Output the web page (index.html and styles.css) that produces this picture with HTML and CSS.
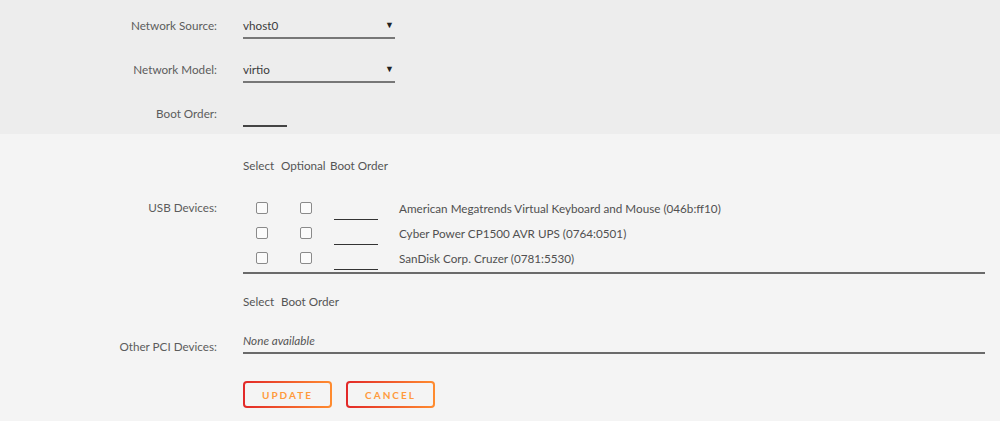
FILE: index.html
```html
<!DOCTYPE html>
<html lang="en">
<head>
    <meta charset="UTF-8">
    <title>Edit VM</title>
    <link rel="stylesheet" href="styles.css">
</head>
<body>
    <div class="band">
        <div class="row">
            <span class="label">Network Source:</span>
            <div class="select"><span>vhost0</span><span class="arrow">&#9660;</span></div>
        </div>
        <div class="row">
            <span class="label">Network Model:</span>
            <div class="select"><span>virtio</span><span class="arrow">&#9660;</span></div>
        </div>
        <div class="row">
            <span class="label">Boot Order:</span>
            <div class="order"></div>
        </div>
    </div>

    <div class="section">
        <div class="row head-row">
            <span class="label"></span>
            <div class="cols">
                <span>Select</span>
                <span>Optional</span>
                <span>Boot Order</span>
            </div>
        </div>

        <div class="row usb-row">
            <span class="label usb-label">USB Devices:</span>
            <div class="usb-list">
                <div class="cols usb">
                    <span class="box"></span>
                    <span class="box"></span>
                    <span class="order small"></span>
                    <span class="name">American Megatrends Virtual Keyboard and Mouse (046b:ff10)</span>
                </div>
                <div class="cols usb">
                    <span class="box"></span>
                    <span class="box"></span>
                    <span class="order small"></span>
                    <span class="name">Cyber Power CP1500 AVR UPS (0764:0501)</span>
                </div>
                <div class="cols usb">
                    <span class="box"></span>
                    <span class="box"></span>
                    <span class="order small"></span>
                    <span class="name">SanDisk Corp. Cruzer (0781:5530)</span>
                </div>
            </div>
        </div>

        <div class="row head-row pci-head">
            <span class="label"></span>
            <div class="cols two">
                <span>Select</span>
                <span>Boot Order</span>
            </div>
        </div>

        <div class="row pci-row">
            <span class="label pci-label">Other PCI Devices:</span>
            <div class="none">None available</div>
        </div>

        <div class="row buttons">
            <span class="label"></span>
            <button type="submit">Update</button>
            <button type="button">Cancel</button>
        </div>
    </div>
</body>
</html>
```

FILE: styles.css
```css
body {
    margin: 0;
    font-family: Lato, 'Liberation Sans', sans-serif;
    font-size: 11.7px;
    color: #505050;
    background: #f4f4f4;
}
.band {
    background: #ededed;
    padding: 13px 0 7px;
}
.row {
    display: flex;
    align-items: flex-start;
    padding-right: 15px;
}
.band .row {
    height: 26px;
    margin-bottom: 18px;
}
.band .row:last-child {
    margin-bottom: 0;
}
.label {
    width: 217px;
    flex: none;
    margin-right: 26px;
    text-align: right;
    line-height: 24px;
    color: #5c5c5c;
}
.select {
    width: 152px;
    height: 24px;
    line-height: 24px;
    display: flex;
    justify-content: space-between;
    border-bottom: 2px solid #777;
    color: #3c3c3c;
}
.arrow {
    font-size: 9px;
    padding-right: 1px;
    color: #222;
}
.order {
    width: 44px;
    height: 24px;
    border-bottom: 2px solid #444;
}
.section {
    padding-top: 19px;
}
.cols {
    display: grid;
    grid-template-columns: 38px 49px 69px 1fr;
    align-items: center;
    line-height: 24px;
    color: #555;
}
.cols.two {
    grid-template-columns: 38px 1fr;
}
.usb-row {
    margin-top: 18px;
}
.usb-label {
    line-height: 25px;
}
.usb-list {
    flex: 1;
    border-bottom: 2px solid #6a6a6a;
    padding-bottom: 2px;
}
.usb {
    height: 25px;
}
.box {
    width: 10px;
    height: 10px;
    border: 1px solid #8a8a8a;
    border-radius: 2px;
    background: #fbfbfb;
    justify-self: center;
}
.box:first-child {
    margin-left: -1px;
}
.order.small {
    height: 24px;
    margin-left: 4px;
    border-bottom: 1px solid #333;
    align-self: start;
}
.name {
    color: #505050;
}
.pci-head {
    margin-top: 15px;
}
.pci-row {
    margin-top: 15px;
}
.pci-label {
    padding-top: 6px;
}
.none {
    flex: 1;
    line-height: 24px;
    font-style: italic;
    color: #555;
    border-bottom: 2px solid #6a6a6a;
}
.buttons {
    margin-top: 23px;
}
button {
    width: 89px;
    height: 27px;
    margin-right: 14px;
    border: 2px solid transparent;
    border-radius: 4px;
    background: linear-gradient(#f4f4f4, #f4f4f4) padding-box,
        linear-gradient(90deg, #e22828, #ff8c2f) border-box;
    color: #ff9a3c;
    font-family: Lato, 'Liberation Sans', sans-serif;
    font-size: 10px;
    font-weight: bold;
    letter-spacing: 2px;
    text-transform: uppercase;
    cursor: pointer;
}
```
